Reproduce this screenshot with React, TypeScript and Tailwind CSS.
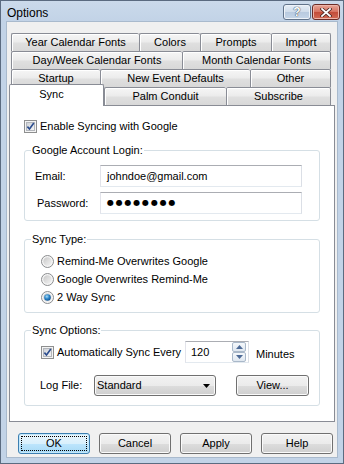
import React from "react";

const btnBg =
  "bg-[linear-gradient(to_bottom,#f2f2f2_0%,#ebebeb_50%,#dddddd_50%,#cfcfcf_100%)]";

function Tab({ label, w, last }: { label: string; w: string; last?: boolean }) {
  return (
    <div
      className={`${w} h-[18px] border-t border-l ${
        last ? "border-r" : ""
      } border-[#898c95] rounded-t-[2px] bg-[linear-gradient(to_bottom,#f6f6f6,#ececec_45%,#dfdfdf_55%,#d8d8d8)] shadow-[inset_1px_1px_0_#ffffff] flex items-center justify-center text-[11px] leading-[13px]`}
    >
      {label}
    </div>
  );
}

function CheckBox({ id }: { id: string }) {
  return (
    <svg width="13" height="13" viewBox="0 0 13 13" className="shrink-0">
      <defs>
        <linearGradient id={id} x1="0" y1="0" x2="1" y2="1">
          <stop offset="0" stopColor="#cbcfd5" />
          <stop offset="1" stopColor="#f7f7f7" />
        </linearGradient>
      </defs>
      <rect x="0.5" y="0.5" width="12" height="12" fill="#f4f4f4" stroke="#8e8f8f" />
      <rect x="2.5" y="2.5" width="8" height="8" fill={`url(#${id})`} stroke="#b3b6bb" />
      <path d="M3.4 6.6 L5.5 9 L9.8 3" fill="none" stroke="#2b4c8e" strokeWidth="1.6" />
    </svg>
  );
}

function Radio({ id, on }: { id: string; on?: boolean }) {
  return (
    <svg width="13" height="13" viewBox="0 0 13 13" className="shrink-0">
      <defs>
        <linearGradient id={`${id}o`} x1="0" y1="0" x2="1" y2="1">
          <stop offset="0" stopColor="#c8c8c8" />
          <stop offset="1" stopColor="#f4f4f4" />
        </linearGradient>
        <radialGradient id={`${id}d`} cx="0.4" cy="0.35" r="0.7">
          <stop offset="0" stopColor="#a9dcf7" />
          <stop offset="0.5" stopColor="#2d86c8" />
          <stop offset="1" stopColor="#0f4f8f" />
        </radialGradient>
      </defs>
      <circle cx="6.5" cy="6.5" r="6" fill="#f5f5f5" stroke="#8a8c8e" />
      <circle cx="6.5" cy="6.5" r="4.2" fill={`url(#${id}o)`} />
      {on && <circle cx="6.5" cy="6.5" r="3.3" fill={`url(#${id}d)`} />}
    </svg>
  );
}

function Button({ label, focused, w = "w-[72px]" }: { label: string; focused?: boolean; w?: string }) {
  if (focused) {
    return (
      <div
        className={`${w} h-[21px] relative rounded-[3px] border border-[#3c7fb1] bg-[linear-gradient(to_bottom,#eaf6fd_0%,#d9f0fc_50%,#bee6fd_50%,#a7d9f5_100%)] shadow-[inset_0_0_0_1px_#c4e8fb] flex items-center justify-center text-[11px]`}
      >
        <div className="absolute inset-[2px] border border-dotted border-[#000]" />
        {label}
      </div>
    );
  }
  return (
    <div
      className={`${w} h-[21px] rounded-[3px] border border-[#707070] ${btnBg} shadow-[inset_0_0_0_1px_#fafafa] flex items-center justify-center text-[11px]`}
    >
      {label}
    </div>
  );
}

function Legend({ children }: { children: React.ReactNode }) {
  return <legend className="ml-[6px] px-[1px] leading-[13px] text-[11px]">{children}</legend>;
}

function SpinArrow({ up }: { up?: boolean }) {
  return (
    <div className="w-[14px] h-[10px] rounded-[2px] border border-[#a9b8c9] bg-[linear-gradient(to_bottom,#f5f8fb,#dfe7f0)] flex items-center justify-center">
      <svg width="7" height="4" viewBox="0 0 7 4">
        {up ? (
          <path d="M0 4 L3.5 0 L7 4 Z" fill="#4d6a96" />
        ) : (
          <path d="M0 0 L3.5 4 L7 0 Z" fill="#4d6a96" />
        )}
      </svg>
    </div>
  );
}

export default function App() {
  return (
    <div className="w-[344px] h-[464px] border border-[#5b6b80] bg-[#c2d3e7] px-[5px] pb-[5px] flex flex-col [font-family:'Liberation_Sans',Arial,sans-serif] text-black text-[11px]">
      {/* Title bar */}
      <div className="h-[20px] -mx-[5px] px-[6px] flex items-start justify-between bg-[linear-gradient(to_bottom,#cbdaeb,#c2d3e7)]">
        <div className="pt-[5px] text-[12px] leading-[14px] text-black">Options</div>
        <div className="flex gap-[1px] pt-[3px] -mr-[3px]">
          <div className="w-[28px] h-[16px] rounded-[3px] border border-[#61738a] bg-[linear-gradient(to_bottom,#e6eef7,#cfdcea_50%,#b8cadf_50%,#c5d5e8)] shadow-[inset_0_0_0_1px_#eef3f9] flex items-center justify-center">
            <span className="text-[12px] leading-[12px] font-bold text-white [text-shadow:0_0_1px_#2c3b50,0_0_1px_#2c3b50]">?</span>
          </div>
          <div className="w-[28px] h-[16px] rounded-[3px] border border-[#6b2c26] bg-[linear-gradient(to_bottom,#e7a698,#d7715f_50%,#c24b38_50%,#d26b55)] shadow-[inset_0_0_0_1px_#edb5a9] flex items-center justify-center">
            <svg width="12" height="9" viewBox="0 0 12 9">
              <path d="M2 1 L10 8 M10 1 L2 8" stroke="#4a2420" strokeWidth="3.4" strokeLinecap="square" />
              <path d="M2 1 L10 8 M10 1 L2 8" stroke="#ffffff" strokeWidth="1.8" strokeLinecap="square" />
            </svg>
          </div>
        </div>
      </div>

      {/* Client area */}
      <div className="flex-1 border border-[#a9bacd] bg-[#f0f0f0] flex flex-col">
        <div className="pt-[11px] px-[4px] flex flex-col">
          <div className="flex">
            <Tab label="Year Calendar Fonts" w="w-[128px]" />
            <Tab label="Colors" w="w-[61px]" />
            <Tab label="Prompts" w="w-[71px]" />
            <Tab label="Import" w="w-[60px]" last />
          </div>
          <div className="flex">
            <Tab label="Day/Week Calendar Fonts" w="w-[171px]" />
            <Tab label="Month Calendar Fonts" w="w-[149px]" last />
          </div>
          <div className="flex">
            <Tab label="Startup" w="w-[89px]" />
            <Tab label="New Event Defaults" w="w-[150px]" />
            <Tab label="Other" w="w-[81px]" last />
          </div>
        </div>
        <div className="px-[2px] h-[18px] flex items-end">
          <div className="w-[95px] h-[22px] -mb-px relative z-10 bg-white border-t border-l border-r border-[#898c95] rounded-t-[2px] flex justify-center pt-[3px] pr-[10px] text-[11px] leading-[13px]">
            Sync
          </div>
          <Tab label="Palm Conduit" w="w-[122px]" />
          <Tab label="Subscribe" w="w-[105px]" last />
        </div>

        {/* Panel */}
        <div className="mx-[2px] h-[317px] border border-[#898c95] bg-white px-[14px] pt-[14px] flex flex-col">
          <div className="flex items-center h-[13px] gap-[3px]">
            <CheckBox id="cb1" />
            <span className="leading-[13px]">Enable Syncing with Google</span>
          </div>

          <fieldset className="mt-[11px] border border-[#d5dfe5] rounded-[3px] pb-[6px]">
            <Legend>Google Account Login:</Legend>
            <div className="mt-[8px] flex items-center h-[22px]">
              <span className="w-[75px] pl-[10px]">Email:</span>
              <div className="w-[202px] h-[22px] border border-[#abadb3] border-l-[#e2e3ea] border-r-[#dbdfe6] border-b-[#e3e9ef] flex items-center pl-[6px]">
                johndoe@gmail.com
              </div>
            </div>
            <div className="mt-[5px] flex items-center h-[22px]">
              <span className="w-[75px] pl-[12px]">Password:</span>
              <div className="w-[202px] h-[22px] border border-[#abadb3] border-l-[#e2e3ea] border-r-[#dbdfe6] border-b-[#e3e9ef] flex items-center pl-[6px] text-[8px] tracking-[1.8px] [font-family:'DejaVu_Sans',sans-serif]">
                ●●●●●●●●
              </div>
            </div>
          </fieldset>

          <fieldset className="mt-[12px] border border-[#d5dfe5] rounded-[3px] pb-[6px]">
            <Legend>Sync Type:</Legend>
            <div className="mt-[6px] flex flex-col pl-[16px]">
              <div className="h-[18px] flex items-center gap-[3px]">
                <Radio id="r1" />
                <span>Remind-Me Overwrites Google</span>
              </div>
              <div className="h-[18px] flex items-center gap-[3px]">
                <Radio id="r2" />
                <span>Google Overwrites Remind-Me</span>
              </div>
              <div className="h-[18px] flex items-center gap-[3px]">
                <Radio id="r3" on />
                <span>2 Way Sync</span>
              </div>
            </div>
          </fieldset>

          <fieldset className="mt-[11px] border border-[#d5dfe5] rounded-[3px] pb-[9px]">
            <Legend>Sync Options:</Legend>
            <div className="mt-[4px] flex items-center h-[22px] pl-[16px]">
              <CheckBox id="cb2" />
              <span className="w-[131px] pl-[3px]">Automatically Sync Every</span>
              <div className="w-[64px] h-[22px] border border-[#abadb3] border-l-[#e2e3ea] border-r-[#dbdfe6] border-b-[#e3e9ef] bg-white flex items-center justify-between pl-[5px] pr-[2px]">
                <span>120</span>
                <div className="flex flex-col">
                  <SpinArrow up />
                  <SpinArrow />
                </div>
              </div>
              <span className="ml-[7px] pt-[4px]">Minutes</span>
            </div>
            <div className="mt-[12px] flex items-center h-[21px]">
              <span className="w-[69px] pl-[15px]">Log File:</span>
              <div className={`w-[122px] h-[21px] rounded-[3px] border border-[#707070] ${btnBg} shadow-[inset_0_0_0_1px_#fafafa] flex items-center justify-between pl-[2px] pr-[5px]`}>
                <span>Standard</span>
                <svg width="7" height="4" viewBox="0 0 7 4">
                  <path d="M0 0 L7 0 L3.5 4 Z" fill="#000" />
                </svg>
              </div>
              <div className="ml-[20px]">
                <Button label="View..." w="w-[73px]" />
              </div>
            </div>
          </fieldset>
        </div>

        {/* Bottom buttons */}
        <div className="mt-[11px] pl-[11px] flex gap-[9px]">
          <Button label="OK" focused />
          <Button label="Cancel" />
          <Button label="Apply" />
          <Button label="Help" />
        </div>
      </div>
    </div>
  );
}
